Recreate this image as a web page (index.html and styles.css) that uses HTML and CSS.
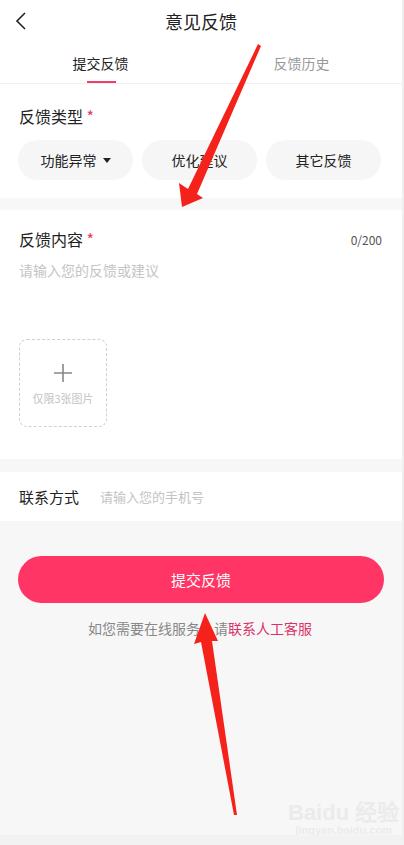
FILE: index.html
```html
<!DOCTYPE html>
<html lang="zh-CN">
<head>
    <meta charset="UTF-8">
    <meta name="viewport" content="width=device-width, initial-scale=1.0">
    <title>意见反馈</title>
    <link rel="stylesheet" href="styles.css">
</head>
<body>
    <div class="page">
        <header class="topbar">
            <span class="back">
                <svg width="12" height="20" viewBox="0 0 12 20"><path d="M10 2 L2 10 L10 18" fill="none" stroke="#222" stroke-width="1.6"/></svg>
            </span>
            <h1>意见反馈</h1>
        </header>
        <nav class="tabs">
            <div class="tab active">提交反馈</div>
            <div class="tab">反馈历史</div>
        </nav>

        <section class="card type-card">
            <div class="label">反馈类型 <i>*</i></div>
            <div class="chips">
                <div class="chip">功能异常 <span class="caret"></span></div>
                <div class="chip">优化建议</div>
                <div class="chip">其它反馈</div>
            </div>
        </section>

        <section class="card content-card">
            <div class="label-row">
                <div class="label">反馈内容 <i>*</i></div>
                <span class="count">0/200</span>
            </div>
            <div class="placeholder">请输入您的反馈或建议</div>
            <div class="upload">
                <svg width="18" height="18" viewBox="0 0 18 18"><path d="M9 0 V18 M0 9 H18" stroke="#888" stroke-width="1.6"/></svg>
                <span>仅限3张图片</span>
            </div>
        </section>

        <section class="card contact">
            <span class="contact-label">联系方式</span>
            <span class="contact-input">请输入您的手机号</span>
        </section>

        <div class="actions">
            <button class="submit">提交反馈</button>
            <p class="hint">如您需要在线服务，请<a>联系人工客服</a></p>
        </div>

        <div class="watermark">
            <div class="wm-logo">Bai<b>du</b> 经验</div>
            <div class="wm-url">jingyan.baidu.com</div>
        </div>

        <!-- 标注箭头 -->
        <svg class="arrows" width="404" height="845" viewBox="0 0 404 845">
            <polygon fill="#f5221b" points="258,44 261,46 197,194 203,198 182,207 179,183 188,189"/>
            <polygon fill="#f5221b" points="234,815 237,815 212,641 218,641 205,613 194,644 201,642"/>
        </svg>
    </div>
</body>
</html>
```

FILE: styles.css
```css
*{
    margin:0;
    padding:0;
    box-sizing:border-box;
}
body{
    font-family:"Noto Sans CJK SC","Noto Sans",sans-serif;
    background:#f7f7f7;
    color:#222;
}
.page{
    width:404px;
    height:845px;
    position:relative;
    background:#f7f7f7;
    overflow:hidden;
    border-right:2px solid #efefef;
    border-bottom:10px solid #f2f2f2;
}
.topbar{
    height:42px;
    background:#fff;
    display:flex;
    align-items:center;
    justify-content:center;
    position:relative;
}
.topbar h1{
    font-size:18px;
    font-weight:normal;
    color:#222;
}
.topbar .back{
    position:absolute;
    left:15px;
    top:11px;
}
.tabs{
    height:42px;
    background:#fff;
    display:flex;
    border-bottom:1px solid #f0f0f0;
}
.tab{
    flex:1;
    display:flex;
    align-items:center;
    justify-content:center;
    font-size:14px;
    color:#999;
    position:relative;
}
.tab.active{
    color:#222;
}
.tab.active::after{
    content:"";
    position:absolute;
    bottom:0;
    left:50%;
    width:29px;
    margin-left:-14px;
    height:2px;
    background:#f23d6a;
}
.card{
    background:#fff;
}
.label{
    font-size:16px;
    color:#222;
}
.label i{
    font-style:normal;
    color:#e8336b;
}
.type-card{
    padding:20px 20px 18px 19px;
}
.chips{
    display:flex;
    gap:9px;
    margin-top:12px;
    margin-left:-1px;
}
.chip{
    width:115px;
    height:40px;
    background:#f6f6f7;
    border-radius:20px;
    display:flex;
    align-items:center;
    justify-content:center;
    font-size:14px;
    color:#222;
}
.caret{
    display:inline-block;
    width:0;
    height:0;
    border-left:4px solid transparent;
    border-right:4px solid transparent;
    border-top:5px solid #222;
    margin-left:6px;
}
.content-card{
    margin-top:12px;
    height:249px;
    padding:17px 20px 0 19px;
}
.label-row{
    display:flex;
    justify-content:space-between;
    align-items:center;
}
.count{
    font-size:12px;
    color:#555;
}
.placeholder{
    margin-top:9px;
    font-size:14px;
    color:#c4c4c4;
}
.upload{
    margin-top:59px;
    width:88px;
    height:88px;
    border:1px dashed #d0d0d0;
    border-radius:8px;
    display:flex;
    flex-direction:column;
    align-items:center;
    justify-content:center;
    gap:8px;
    padding-top:4px;
}
.upload span{
    font-size:11px;
    color:#c4c4c4;
}
.contact{
    margin-top:13px;
    height:49px;
    display:flex;
    align-items:center;
    padding-left:19px;
}
.contact-label{
    font-size:15px;
    color:#222;
    width:81px;
}
.contact-input{
    font-size:13px;
    color:#c4c4c4;
}
.actions{
    padding:35px 20px 0 18px;
}
.submit{
    display:block;
    width:366px;
    height:47px;
    border:none;
    border-radius:24px;
    background:#fe3565;
    color:#fff;
    font-family:inherit;
    font-size:15px;
}
.hint{
    margin-top:15px;
    text-align:center;
    font-size:14px;
    color:#888;
}
.hint a{
    color:#d9336b;
}
.watermark{
    position:absolute;
    left:288px;
    top:802px;
    color:#ebebeb;
    text-align:center;
}
.wm-logo{
    font-family:"Liberation Sans",sans-serif;
    font-size:22px;
    font-weight:bold;
    line-height:22px;
}
.wm-url{
    font-family:"Liberation Sans",sans-serif;
    font-size:11px;
    font-weight:bold;
}
.arrows{
    position:absolute;
    left:0;
    top:0;
    pointer-events:none;
}
```
